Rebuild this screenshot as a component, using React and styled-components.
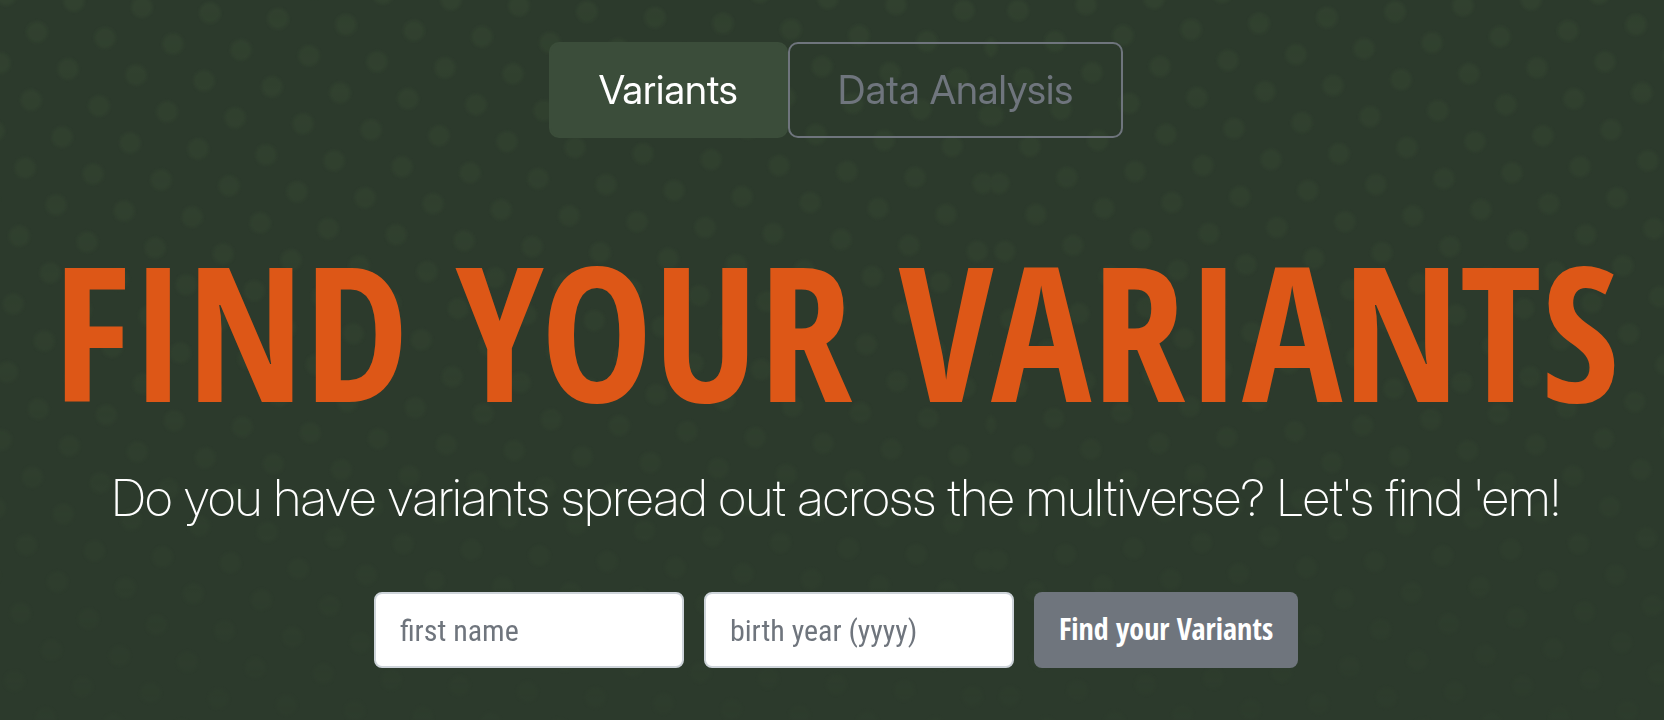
import React from 'react';
import styled, { createGlobalStyle } from 'styled-components';

const SANS = "'Inter Display', Inter, sans-serif";
const CONDENSED = "'Open Sans Condensed', 'Roboto Condensed', sans-serif";

const GlobalStyle = createGlobalStyle`
  *, *::before, *::after { box-sizing: border-box; }
  html { height: 100%; }
  body {
    margin: 0;
    background: #2c3a2c;
    color: #fff;
    font-family: ${SANS};
  }
`;

const Backdrop = styled.svg`
  position: fixed;
  inset: 0;
  z-index: -1;
  width: 100%;
  height: 100%;
`;

const Page = styled.main`
  display: flex;
  flex-direction: column;
  align-items: center;
  padding: 42px 0 48px 8px;
`;

const Tabs = styled.nav`
  display: flex;
`;

const Tab = styled.button`
  height: 96px;
  padding: 0 48px;
  border: 2px solid ${(p) => (p.$active ? '#3b4d3a' : '#6f757d')};
  border-radius: 10px;
  background: ${(p) => (p.$active ? '#3b4d3a' : 'transparent')};
  color: ${(p) => (p.$active ? '#fff' : '#6f757d')};
  font: 400 40px/60px ${SANS};
  cursor: pointer;
`;

const Title = styled.h1`
  margin: 96px 0 0;
  color: #dd5717;
  font: 700 188px/190px ${CONDENSED};
  text-align: center;
  text-transform: uppercase;
  white-space: nowrap;
`;

const Lead = styled.p`
  margin: 42px 0 0;
  font: 200 51px/64px ${SANS};
  text-align: center;
`;

const Form = styled.form`
  display: flex;
  flex-wrap: wrap;
  justify-content: center;
  gap: 20px;
  margin-top: 62px;
`;

const Field = styled.input`
  width: 310px;
  height: 76px;
  padding: 0 24px;
  border: 2px solid #ced4da;
  border-radius: 8px;
  background: #fff;
  color: #212529;
  font: 400 30px/48px 'Roboto Condensed', sans-serif;

  &::placeholder {
    color: #6f757d;
    opacity: 1;
  }
`;

const Submit = styled.button`
  height: 76px;
  padding: 0 25px 2px;
  border: 0;
  border-radius: 8px;
  background: #6f757d;
  color: #fff;
  font: 700 30px/48px ${CONDENSED};
  cursor: pointer;
`;

function HalftoneBackdrop() {
  return (
    <Backdrop viewBox="0 0 1664 720" preserveAspectRatio="xMidYMid slice" aria-hidden="true">
      <defs>
        <radialGradient id="dot">
          <stop offset="0.6" stopColor="#31412f" />
          <stop offset="1" stopColor="#31412f" stopOpacity="0" />
        </radialGradient>
        <pattern
          id="halftone"
          width="68.26"
          height="68.26"
          patternUnits="userSpaceOnUse"
          patternTransform="translate(37 32) rotate(5) translate(-17 -17)"
        >
          <circle cx="17" cy="17" r="13" fill="url(#dot)" />
          <circle cx="51.13" cy="51.13" r="13" fill="url(#dot)" />
        </pattern>
        <linearGradient id="fade" x1="0" y1="0" x2="0" y2="1">
          <stop offset="0" stopColor="#fff" />
          <stop offset="0.5" stopColor="#bbb" />
          <stop offset="1" stopColor="#444" />
        </linearGradient>
        <mask id="fadeMask">
          <rect width="1664" height="720" fill="url(#fade)" />
        </mask>
      </defs>
      <rect width="1664" height="720" fill="#2c3a2c" />
      <g mask="url(#fadeMask)">
        <rect width="991" height="720" fill="url(#halftone)" />
        <rect width="991" height="720" fill="url(#halftone)" transform="translate(1982 0) scale(-1 1)" />
      </g>
    </Backdrop>
  );
}

export default function App() {
  return (
    <>
      <GlobalStyle />
      <HalftoneBackdrop />
      <Page>
        <Tabs>
          <Tab type="button" $active aria-current="page">Variants</Tab>
          <Tab type="button">Data Analysis</Tab>
        </Tabs>
        <Title>Find your Variants</Title>
        <Lead>Do you have variants spread out across the multiverse? Let's find 'em!</Lead>
        <Form onSubmit={(e) => e.preventDefault()}>
          <Field type="text" name="firstName" aria-label="first name" placeholder="first name" />
          <Field type="text" name="birthYear" inputMode="numeric" aria-label="birth year" placeholder="birth year (yyyy)" />
          <Submit type="submit">Find your Variants</Submit>
        </Form>
      </Page>
    </>
  );
}
